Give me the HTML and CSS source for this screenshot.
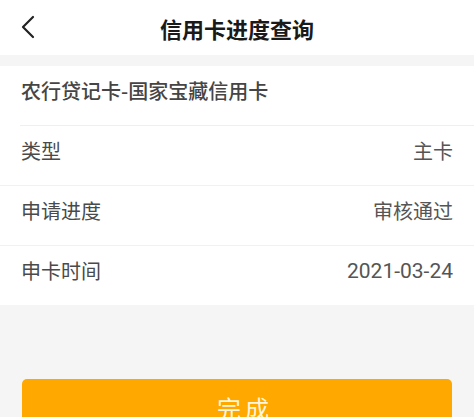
FILE: index.html
```html
<!doctype html>
<html>
    <head>
        <meta http-equiv="Content-Type" content="text/html; charset=utf-8">
        <link rel="stylesheet" href="styles.css">
    </head>
    <body>
        <div class="page">
            <div class="header">
                <span class="back">
                    <svg width="16" height="24" viewBox="0 0 16 24">
                        <path d="M13 2 L3 12 L13 22" fill="none" stroke="#222" stroke-width="2.2" stroke-linecap="round" stroke-linejoin="round"/>
                    </svg>
                </span>
                <div class="title">信用卡进度查询</div>
            </div>
            <div class="info">
                <div class="card-name">农行贷记卡-国家宝藏信用卡</div>
                <div class="row">
                    <span class="label">类型</span>
                    <span class="value">主卡</span>
                </div>
                <div class="row">
                    <span class="label">申请进度</span>
                    <span class="value">审核通过</span>
                </div>
                <div class="row">
                    <span class="label">申卡时间</span>
                    <span class="value num">2021-03-24</span>
                </div>
            </div>
            <div class="footer">
                <div class="btn">完成</div>
            </div>
        </div>
    </body>
</html>
```

FILE: styles.css
```css
html, body{
    margin: 0;
    padding: 0;
    background: #f5f5f6;
}
.page{
    width: 474px;
    height: 417px;
    overflow: hidden;
    font-family: "Noto Sans CJK SC", "Noto Sans", sans-serif;
}
.header{
    height: 55px;
    background: #fff;
    display: flex;
    align-items: center;
    justify-content: center;
    position: relative;
}
.back{
    position: absolute;
    left: 20px;
    top: 15px;
    width: 16px;
    height: 24px;
}
.back svg{
    display: block;
}
.title{
    font-size: 22px;
    font-weight: bold;
    color: #1a1a1a;
    line-height: 24px;
    padding-top: 1px;
}
.info{
    margin-top: 11px;
    background: #fff;
}
.card-name{
    height: 49px;
    padding-bottom: 10px;
    margin-left: 20px;
    padding-left: 1px;
    display: flex;
    align-items: center;
    font-size: 20px;
    font-weight: 500;
    color: #454545;
    border-bottom: 1px solid #efefef;
}
.row{
    height: 49px;
    padding: 0 21px 10px;
    display: flex;
    align-items: center;
    justify-content: space-between;
    font-size: 20px;
    color: #4a4a4a;
    border-bottom: 1px solid #f1f1f1;
}
.row:last-child{
    border-bottom: none;
}
.value{
    color: #555;
}
.num{
    font-family: Roboto, "Noto Sans CJK SC", sans-serif;
    font-size: 21px;
}
.footer{
    padding: 74px 22px 0;
}
.btn{
    height: 56px;
    border-radius: 5px;
    background: #ffa800;
    color: #fff6dc;
    font-size: 24px;
    letter-spacing: 4px;
    padding-left: 16px;
    display: flex;
    align-items: center;
    justify-content: center;
}
```
